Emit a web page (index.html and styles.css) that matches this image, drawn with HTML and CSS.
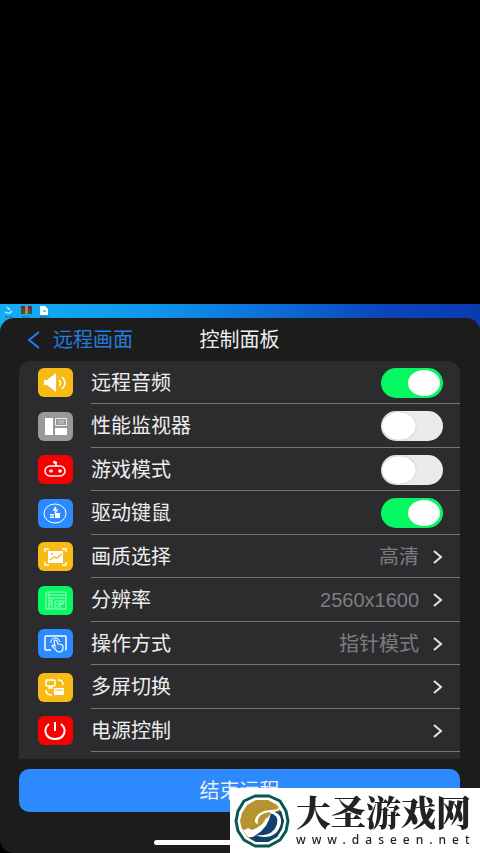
FILE: index.html
```html
<!DOCTYPE html>
<html lang="zh-CN">
<head>
    <meta charset="UTF-8">
    <meta name="viewport" content="width=device-width, initial-scale=1.0">
    <title>控制面板</title>
    <link rel="stylesheet" href="styles.css">
</head>
<body>
    <main class="remote-screen">
        <div class="desktop">
            <svg class="desktop-icons" viewBox="0 0 56 15" aria-hidden="true">
                <path d="M7 3l3 3M5 8q4 3 7-1" fill="none" stroke="#b9e4ff" stroke-width="1.500"/>
                <path d="M5 13h9M22 13h9M40 13h9" stroke="#315579" stroke-width="1" stroke-dasharray="3 1"/>
                <path d="M21 2h11v3H21z" fill="#70262e"/>
                <path d="M21 5h11v2H21z" fill="#374b73"/>
                <path d="M21 7h11v3H21z" fill="#37592f"/>
                <path d="M25 2h3v8h-3z" fill="#b9814c"/>
                <path d="M40 2h5l3 3v6h-8z" fill="#fff"/>
                <path d="M43 6h3v2h-3z" fill="#8dbccf"/>
            </svg>
        </div>
        <section class="panel">
            <header class="panel-header">
                <a href="#" class="back">
                    <svg viewBox="0 0 14 18" aria-hidden="true"><path d="M12 1L2 9l10 8"/></svg>
                    远程画面
                </a>
                <h1>控制面板</h1>
            </header>

            <div class="card">
                <label class="row">
                    <span class="icon yellow">
                        <svg viewBox="0 0 35 29"><path d="M6 12h3l9-7v19l-9-7H6z" fill="#fff"/><path d="M21 12q3 3 0 6M24 9q6 6 0 12" class="line"/></svg>
                    </span>
                    <span class="row-body">
                        <span class="name">远程音频</span>
                        <input type="checkbox" class="switch" checked>
                    </span>
                </label>
                <label class="row">
                    <span class="icon gray">
                        <svg viewBox="0 0 35 29"><path d="M7 6h8v17H7zM17 16h12v7H17z" fill="#fff"/><path d="M17.500 6.500h11v7h-11z" fill="#999" stroke="#eee" stroke-width="1"/><path d="M20 9h6M20 11h6" stroke="#ccc" stroke-width="1"/></svg>
                    </span>
                    <span class="row-body">
                        <span class="name">性能监视器</span>
                        <input type="checkbox" class="switch">
                    </span>
                </label>
                <label class="row">
                    <span class="icon red">
                        <svg viewBox="0 0 35 29"><rect x="7" y="11" width="20" height="10" rx="5" class="line"/><path d="M18 11V9l-3-2M16 6l3 2" class="line"/><path d="M11 16h4" class="line"/><path d="M13 14v4" class="thin"/><circle cx="22" cy="16" r="1.800" fill="#fff"/></svg>
                    </span>
                    <span class="row-body">
                        <span class="name">游戏模式</span>
                        <input type="checkbox" class="switch">
                    </span>
                </label>
                <label class="row">
                    <span class="icon blue">
                        <svg viewBox="0 0 35 29"><ellipse cx="17" cy="14.500" rx="11" ry="9.500" class="thin"/><path d="M18 8l-2 3h3l-2 3" class="line"/><path d="M12 15h4v4h-4zM17 14h5v5h-5z" fill="#fff"/><path d="M12 17h4" stroke="#2c89fe" stroke-width="1"/></svg>
                    </span>
                    <span class="row-body">
                        <span class="name">驱动键鼠</span>
                        <input type="checkbox" class="switch" checked>
                    </span>
                </label>
                <button type="button" class="row">
                    <span class="icon yellow">
                        <svg viewBox="0 0 35 29"><path d="M7 10V7h4M24 7h4v3M7 20v3h4M24 23h4v-3" class="line"/><path d="M10 9h15v12H10z" fill="#fff"/><path d="M12 18l4-3 3 1 5-4" fill="none" stroke="#f8ba14" stroke-width="1.500"/><circle cx="14" cy="12" r="1" fill="#f8ba14"/></svg>
                    </span>
                    <span class="row-body">
                        <span class="name">画质选择</span>
                        <span class="value">高清</span>
                        <svg class="chevron" viewBox="0 0 10 14"><path d="M1 1l7 6-7 6"/></svg>
                    </span>
                </button>
                <button type="button" class="row">
                    <span class="icon green">
                        <svg viewBox="0 0 35 29"><path d="M8 6h20v17H8zM11 6v17M8 9h20M14 22V12h13M17 22v-7h10M18 18h8M22 15v7M18 22l8-6M11 12h3M11 15h3M11 18h3" fill="none" stroke="#a0ffc2" stroke-width="1"/></svg>
                    </span>
                    <span class="row-body">
                        <span class="name">分辨率</span>
                        <span class="value">2560x1600</span>
                        <svg class="chevron" viewBox="0 0 10 14"><path d="M1 1l7 6-7 6"/></svg>
                    </span>
                </button>
                <button type="button" class="row">
                    <span class="icon blue">
                        <svg viewBox="0 0 35 29"><path d="M13 21H8q-1 0-1-1V8q0-1 1-1h19q1 0 1 1v12q0 1-1 1" class="line"/><path d="M17 20l-3-3q1-2 3 0l-1-5q1-2 3 0l1 3q6 0 5 4 0 4-4 4-2 0-4-3z" fill="#2c89fe" stroke="#fff" stroke-width="1.200"/><path d="M13 14q-1-4 4-5 4 0 5 4" class="thin"/></svg>
                    </span>
                    <span class="row-body">
                        <span class="name">操作方式</span>
                        <span class="value">指针模式</span>
                        <svg class="chevron" viewBox="0 0 10 14"><path d="M1 1l7 6-7 6"/></svg>
                    </span>
                </button>
                <button type="button" class="row">
                    <span class="icon yellow">
                        <svg viewBox="0 0 35 29"><rect x="8" y="7" width="9" height="6" rx="1" class="line"/><path d="M12 13v2M10 15h5M20 7q5 0 5 5M8 17q0 5 6 5" class="line"/><rect x="16" y="15" width="10" height="7" rx="1" fill="#fff"/><path d="M17 17h8" stroke="#f8ba14" stroke-width="1"/></svg>
                    </span>
                    <span class="row-body">
                        <span class="name">多屏切换</span>
                        <svg class="chevron" viewBox="0 0 10 14"><path d="M1 1l7 6-7 6"/></svg>
                    </span>
                </button>
                <button type="button" class="row">
                    <span class="icon red">
                        <svg viewBox="0 0 35 29"><path d="M11 8c-7 6-3 15 6 15s13-9 6-15M17 6v9" fill="none" stroke="#fff" stroke-width="2"/></svg>
                    </span>
                    <span class="row-body">
                        <span class="name">电源控制</span>
                        <svg class="chevron" viewBox="0 0 10 14"><path d="M1 1l7 6-7 6"/></svg>
                    </span>
                </button>
            </div>

            <button type="button" class="end-btn">结束远程</button>
            <div class="home-bar"></div>
        </section>
    </main>

    <aside class="watermark">
        <svg class="logo" viewBox="0 0 56 56" aria-hidden="true">
            <path d="M21 3h14l11 5 6 10 2 10-2 10-6 9-11 6H21l-11-6-6-9-2-10 2-10 6-10z" fill="#fff" stroke="#07594e" stroke-width="3" stroke-linejoin="round"/>
            <path d="M22 7h12l9 5 5 8 2 8-2 8-5 8-9 5H22l-9-5-5-8-2-8 2-8 5-8z" fill="#b5932e"/>
            <path d="M47 18l3 10-2 8-5 8-9 5H22l-7-4Q30 38 37 20z" fill="#123f6b"/>
            <path d="M24 31q-5-1-2-7 5-7 15-7 7 0 11-4-2 5-9 6-9 0-13 4-3 3-2 8z" fill="#fff"/>
            <path d="M23 31q9-2 14-11-3 15-15 22-5 4-9 1l-5-7 3 1 3-2 4 2q11-4 16-14-5 7-11 8z" fill="#fff"/>
            <path d="M36 18q12 1 11 12-3 14-17 14-5 0-8-2 17 2 21-11 2-9-7-11z" fill="#fff"/>
        </svg>
        <div>
            <div class="site-name">大圣游戏网</div>
            <div class="site-url">www.daseen.net</div>
        </div>
    </aside>
</body>
</html>
```

FILE: styles.css
```css
* {
    box-sizing: border-box;
}
body {
    margin: 0;
    min-height: 100vh;
    display: flex;
    flex-direction: column;
    justify-content: flex-end;
    background-color: #000;
    color: #eee;
    font-family: "Liberation Sans", "Noto Sans CJK SC", sans-serif;
    font-size: 20px;
    line-height: 24px;
}
button {
    border: none;
    background: none;
    color: inherit;
    font: inherit;
    cursor: pointer;
}
.remote-screen {
    background: linear-gradient(90deg, #12aef5 0%, #1098ec 30%, #0d70d8 55%, #0b45bb 80%, #0a3bb0 100%) top / 100% 40px no-repeat;
}
.desktop {
    height: 14px;
}
.desktop-icons {
    display: block;
    width: 56px;
    height: 15px;
}
.panel {
    background-color: #1c1c1c;
    border-radius: 14px;
    padding: 0 20px 8px 19px;
}
.panel-header {
    display: grid;
    grid-template-columns: 1fr auto 1fr;
    align-items: center;
    height: 43px;
}
.panel-header h1 {
    margin: 0;
    font-size: 20px;
    font-weight: normal;
}
.back {
    display: flex;
    align-items: center;
    gap: 12px;
    padding-left: 8px;
    color: #267bdc;
    text-decoration: none;
}
.back svg {
    width: 14px;
    height: 18px;
    fill: none;
    stroke: #1f80ee;
    stroke-width: 2;
}
.card {
    background-color: #2c2c2e;
    border-radius: 12px 12px 0 0;
    padding-bottom: 7px;
}
.row {
    display: flex;
    align-items: center;
    gap: 18px;
    width: 100%;
    height: 43px;
    padding: 0 0 0 19px;
    text-align: left;
    cursor: pointer;
}
.row:nth-child(even) {
    height: 44px;
}
.row-body {
    flex: 1;
    align-self: stretch;
    display: flex;
    align-items: center;
    gap: 14px;
    padding-top: 1px;
    padding-right: 17px;
    border-bottom: 1px solid #757577;
}
.name {
    flex: 1;
}
.value {
    color: #7d7d80;
}
.icon {
    width: 35px;
    height: 29px;
    border-radius: 6px;
    overflow: hidden;
}
.icon svg {
    display: block;
    width: 35px;
    height: 29px;
}
.yellow {
    background-color: #f8ba14;
}
.gray {
    background-color: #999;
}
.red {
    background-color: #f80000;
}
.blue {
    background-color: #2c89fe;
}
.green {
    background-color: #05f862;
}
.line {
    fill: none;
    stroke: #fff;
    stroke-width: 1.5;
}
.thin {
    fill: none;
    stroke: #fff;
    stroke-width: 1;
}
.chevron {
    width: 10px;
    height: 14px;
    fill: none;
    stroke: #e4e4e4;
    stroke-width: 2;
}
.switch {
    appearance: none;
    display: flex;
    align-items: center;
    width: 62px;
    height: 30px;
    margin: 0;
    padding: 0 1px;
    border-radius: 20px;
    background-color: #ebebeb;
    cursor: pointer;
}
.switch::before {
    content: "";
    width: 34px;
    height: 28px;
    border-radius: 50%;
    background-color: #fff;
    box-shadow: 0 0 1px #777;
}
.switch:checked {
    justify-content: flex-end;
    padding-right: 3px;
    background-color: #05f862;
}
.switch:checked::before {
    width: 32px;
    height: 26px;
    box-shadow: none;
}
.end-btn {
    display: block;
    width: 100%;
    height: 43px;
    margin-top: 10px;
    padding: 0;
    border-radius: 10px;
    background-color: #2c89fe;
}
.home-bar {
    width: 172px;
    height: 5px;
    margin: 28px auto 0;
    border-radius: 3px;
    background-color: #fff;
}
.watermark {
    position: fixed;
    right: 0;
    bottom: 0;
    display: flex;
    align-items: center;
    gap: 6px;
    width: 250px;
    height: 65px;
    padding-left: 4px;
    background-color: #fff;
    color: #222;
    white-space: nowrap;
}
.logo {
    width: 56px;
    height: 56px;
}
.site-name {
    font-family: "Noto Serif CJK SC", "Noto Sans CJK SC", serif;
    font-size: 35px;
    font-weight: 900;
    line-height: 38px;
}
.site-url {
    font-family: "Noto Sans", sans-serif;
    font-size: 12px;
    font-weight: 500;
    line-height: 20px;
    letter-spacing: 6px;
}
```
